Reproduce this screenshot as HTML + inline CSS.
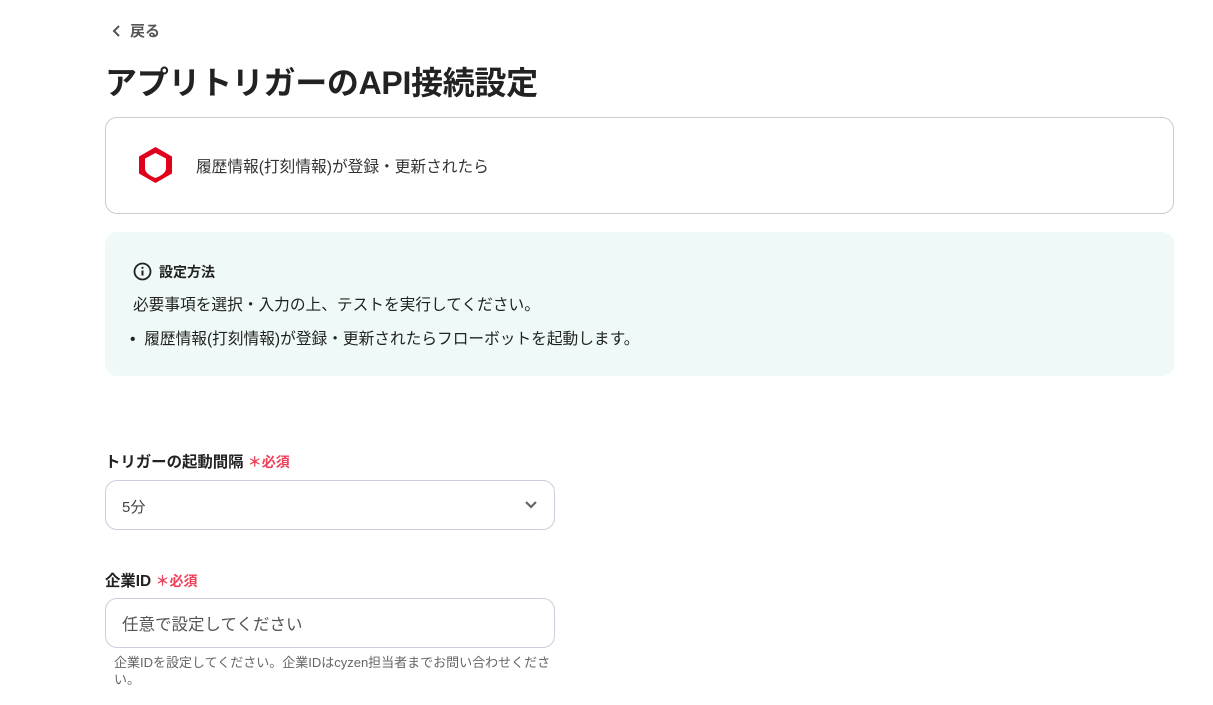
<!DOCTYPE html>
<html><head><meta charset="utf-8"><style>
body{margin:0;width:1213px;height:705px;background:#fff;font-family:"Liberation Sans","Noto Sans CJK JP",sans-serif;color:#222;overflow:hidden;position:relative}
.a{position:absolute}
</style></head><body>
<div class="a" style="left:112px;top:20px;font-size:15px;color:#555;font-weight:bold;display:flex;align-items:center;gap:8px">
<svg width="10" height="12" viewBox="0 0 10 12"><path d="M7 1L2 6l5 5" stroke="#555" stroke-width="2" fill="none"/></svg>戻る</div>
<div class="a" style="left:105px;top:58px;font-size:32px;font-weight:bold;color:#222;letter-spacing:-0.3px">アプリトリガーのAPI接続設定</div>
<div class="a" style="left:105px;top:117px;width:1067px;height:95px;border:1px solid #ccc;border-radius:12px"></div>
<svg class="a" style="left:138px;top:146px" width="35" height="38" viewBox="0 0 35 38"><path d="M17.5 1L34 10.5v17L17.5 37 1 27.5v-17z" fill="#e0001b"/><path d="M17.5 7L28 12.5v10c0 4-5 7.5-10.5 9.5C12 30 7 26.5 7 22.5v-10z" fill="#fff"/></svg>
<div class="a" style="left:196px;top:154px;font-size:15.7px;color:#333">履歴情報(打刻情報)が登録・更新されたら</div>
<div class="a" style="left:105px;top:232px;width:1069px;height:144px;background:#eff9f7;border-radius:12px"></div>
<svg class="a" style="left:133px;top:262px" width="19" height="19" viewBox="0 0 19 19"><circle cx="9.5" cy="9.5" r="8" stroke="#222" stroke-width="1.8" fill="none"/><path d="M9.5 8.5v5" stroke="#222" stroke-width="2"/><circle cx="9.5" cy="5.8" r="1.1" fill="#222"/></svg>
<div class="a" style="left:159px;top:262px;font-size:14px;font-weight:bold">設定方法</div>
<div class="a" style="left:133px;top:292px;font-size:15.7px">必要事項を選択・入力の上、テストを実行してください。</div>
<div class="a" style="left:130px;top:326px;font-size:15.7px">•&nbsp;&nbsp;履歴情報(打刻情報)が登録・更新されたらフローボットを起動します。</div>
<div class="a" style="left:105px;top:450px;font-size:15.4px;font-weight:bold">トリガーの起動間隔 <span style="color:#f0405a;font-size:14px">＊必須</span></div>
<div class="a" style="left:105px;top:480px;width:448px;height:48px;border:1px solid #ccd;border-radius:12px"></div>
<div class="a" style="left:122px;top:496px;font-size:15px;color:#444">5分</div>
<svg class="a" style="left:524px;top:500px" width="14" height="10" viewBox="0 0 14 10"><path d="M2 2l5 5 5-5" stroke="#666" stroke-width="2.2" fill="none"/></svg>
<div class="a" style="left:105px;top:569px;font-size:15.4px;font-weight:bold">企業ID <span style="color:#f0405a;font-size:14px">＊必須</span></div>
<div class="a" style="left:105px;top:598px;width:448px;height:48px;border:1px solid #ccd;border-radius:12px"></div>
<div class="a" style="left:122px;top:611px;font-size:16.5px;color:#555">任意で設定してください</div>
<div class="a" style="left:114px;top:654px;width:440px;font-size:13px;color:#666;line-height:17px">企業IDを設定してください。企業IDはcyzen担当者までお問い合わせください。</div>
</body></html>
